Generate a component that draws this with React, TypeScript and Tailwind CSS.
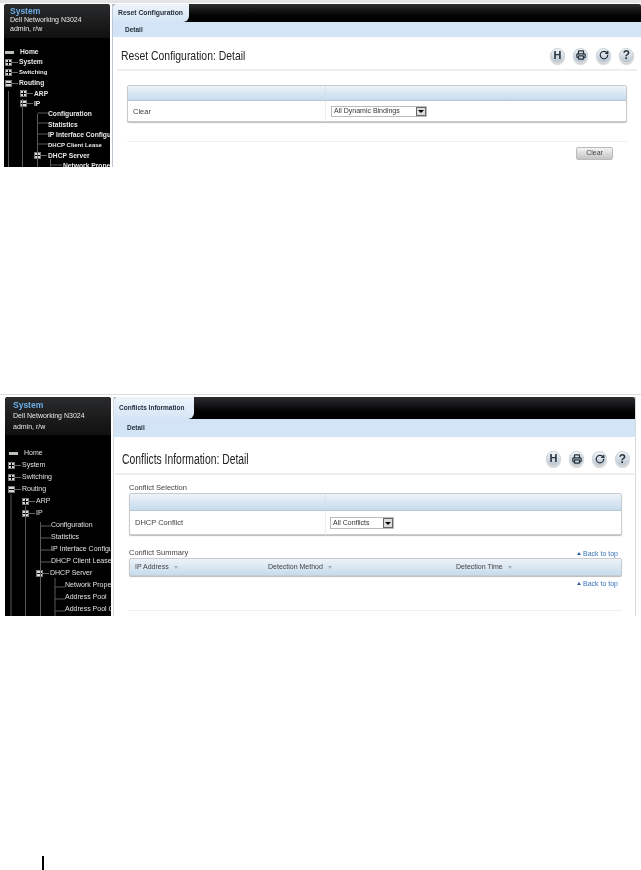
import { Printer, RotateCw } from "lucide-react"
import type { ReactNode } from "react"

const Expander = ({ open, className }: { open?: boolean; className: string }) => (
    <span className={`flex items-center justify-center bg-[#d8d8d8] border border-[#777] text-black font-bold shrink-0 ${className}`}>
        <span className="relative block w-[5px] h-[1px] bg-black">
            {!open && <span className="absolute left-[2px] top-[-2px] w-[1px] h-[5px] bg-black" />}
        </span>
    </span>
)

const ToolIcons = ({ className }: { className: string }) => {
    const circle = "w-[15px] h-[15px] rounded-full bg-gradient-to-b from-[#f4f6f8] to-[#b9c6d2] border border-[#c4ced6] flex items-center justify-center text-[#26323c] font-bold shadow-[0_2px_1px_#d5d5d5]"
    return (
        <div className={`flex ${className}`}>
            <span className={`${circle} text-[11px]`}>H</span>
            <span className={circle}><Printer size={10} strokeWidth={3} /></span>
            <span className={circle}><RotateCw size={10} strokeWidth={3} /></span>
            <span className={`${circle} text-[12px]`}>?</span>
        </div>
    )
}

const TitleBar = ({ tab, className, tabClass, subClass }: { tab: string; className: string; tabClass: string; subClass: string }) => (
    <div className={className}>
        <div className="flex bg-gradient-to-b from-[#2e2f31] to-[#000] rounded-t-[2px]">
            <div className={`bg-gradient-to-b from-[#eef4fb] to-[#d5e5f6] rounded-tl-[3px] rounded-br-[6px] text-[#1f2a36] font-bold flex items-center ${tabClass}`}>
                {tab}
            </div>
        </div>
        <div className={`bg-[#d3e4f6] text-[#1f2a36] font-bold flex items-center ${subClass}`}>Detail</div>
    </div>
)

const Tree = ({ rows, rowClass, className }: { rows: { label: string; pad: string; icon?: "open" | "closed" | "home"; small?: boolean }[]; rowClass: string; className: string }) => (
    <div className={className}>
        {rows.map(r => (
            <div key={r.label} className={`flex items-center whitespace-nowrap ${rowClass} ${r.pad}`}>
                {r.icon === "home" && <span className="w-[9px] h-[3px] bg-[#b8c0b8] mr-[6px] shrink-0" />}
                {(r.icon === "open" || r.icon === "closed") && (
                    <>
                        <Expander open={r.icon === "open"} className="w-[7px] h-[7px]" />
                        <span className="w-[6px] h-[1px] bg-[#666] mr-[1px] shrink-0" />
                    </>
                )}
                <span className={r.small ? "text-[6px]" : ""}>{r.label}</span>
            </div>
        ))}
    </div>
)

const SideHead = ({ className, lineClass }: { className: string; lineClass: string }) => (
    <div className={`bg-gradient-to-b from-[#2b2c2e] to-[#101010] text-[#e8e8e8] ${className}`}>
        <div className="text-[#6bade6] font-bold text-[8.500px] leading-[9px]">System</div>
        <div className={`text-[7px] ${lineClass}`}>Dell Networking N3024</div>
        <div className={`text-[7px] ${lineClass}`}>admin, r/w</div>
    </div>
)

const TreeLines = ({ children }: { children: ReactNode }) => (
    <svg className="absolute inset-0 w-full h-full pointer-events-none" fill="none" stroke="#5a5a5a" strokeWidth="1">
        {children}
    </svg>
)

const selectBox = "flex items-center justify-between border border-[#bbb] bg-white text-[7px] text-[#333]"
const arrowBtn = (
    <span className="w-[10px] h-full bg-[#dcdcdc] border border-[#666] flex items-center justify-center">
        <span className="w-0 h-0 border-x-[3px] border-x-transparent border-t-[3px] border-t-black" />
    </span>
)
const tableHead = "bg-gradient-to-b from-[#eef3f8] to-[#c6dbed] border-b border-[#b4c7d6]"
const tableBox = "border border-[#c9cccf] rounded-[2px] shadow-[0_1px_1px_#bbb] bg-white"

const BackToTop = ({ className }: { className: string }) => (
    <div className={`flex justify-end items-center text-[7px] leading-[9px] text-[#3a73b8] ${className}`}>
        <span className="w-0 h-0 border-x-[2px] border-x-transparent border-b-[3px] border-b-[#2f5f9a] mr-[2px]" />
        Back to top
    </div>
)

const SortHead = ({ label, className }: { label: string; className: string }) => (
    <div className={`flex items-center ${className}`}>
        {label}
        <span className="ml-[5px] w-0 h-0 border-x-[2px] border-x-transparent border-t-[3px] border-t-[#9db3c6]" />
    </div>
)

const resetRows = [
    { label: "Home", pad: "pl-[1px]", icon: "home" as const },
    { label: "System", pad: "pl-[1px]", icon: "closed" as const },
    { label: "Switching", pad: "pl-[1px]", icon: "closed" as const, small: true },
    { label: "Routing", pad: "pl-[1px]", icon: "open" as const },
    { label: "ARP", pad: "pl-[16px]", icon: "closed" as const },
    { label: "IP", pad: "pl-[16px]", icon: "open" as const },
    { label: "Configuration", pad: "pl-[44px]" },
    { label: "Statistics", pad: "pl-[44px]" },
    { label: "IP Interface Configu", pad: "pl-[44px]" },
    { label: "DHCP Client Lease", pad: "pl-[44px]", small: true },
    { label: "DHCP Server", pad: "pl-[30px]", icon: "open" as const },
    { label: "Network Prope", pad: "pl-[59px]" },
]

const conflictRows = [
    { label: "Home", pad: "pl-[4px]", icon: "home" as const },
    { label: "System", pad: "pl-[3px]", icon: "closed" as const },
    { label: "Switching", pad: "pl-[3px]", icon: "closed" as const },
    { label: "Routing", pad: "pl-[3px]", icon: "open" as const },
    { label: "ARP", pad: "pl-[17px]", icon: "closed" as const },
    { label: "IP", pad: "pl-[17px]", icon: "open" as const },
    { label: "Configuration", pad: "pl-[46px]" },
    { label: "Statistics", pad: "pl-[46px]" },
    { label: "IP Interface Configu", pad: "pl-[46px]" },
    { label: "DHCP Client Lease", pad: "pl-[46px]" },
    { label: "DHCP Server", pad: "pl-[31px]", icon: "open" as const },
    { label: "Network Prope", pad: "pl-[60px]" },
    { label: "Address Pool", pad: "pl-[60px]" },
    { label: "Address Pool C", pad: "pl-[60px]" },
]

export default function App() {
    return (
        <div className="relative w-[641px] h-[870px] bg-white overflow-hidden font-['Liberation_Sans',Arial,sans-serif] text-[#333]">
            {/* first screenshot */}
            <div className="h-[167px] border-t-[3px] border-[#e4e4e4] pt-[1px] pl-[4px] flex gap-[2px] overflow-hidden blur-[0.3px]">
                <div className="relative w-[106px] h-[163px] bg-black rounded-t-[3px] overflow-hidden shrink-0">
                    <SideHead className="h-[34px] pl-[6px] pt-[3px]" lineClass="leading-[8.500px]" />
                    <Tree rows={resetRows} rowClass="h-[10.35px] text-[6.700px] font-bold text-[#e8e8e8]" className="pt-[9px]" />
                    <TreeLines>
                        <path d="M4.500 87V163M18.500 95V163M33.500 110V163M33.500 109H44M33.500 119H44M33.500 130H44M33.500 140H44M46.500 155V163M46.500 161H58" />
                    </TreeLines>
                </div>
                <div className="flex-1 min-w-0 border-l border-[#bfc8d0]">
                    <TitleBar
                        tab="Reset Configuration"
                        className="w-full"
                        tabClass="w-[76px] h-[18px] pl-[5px] text-[6.800px]"
                        subClass="h-[15px] pl-[12px] text-[6.500px]"
                    />
                    <div className="flex items-center justify-between h-[34px] mx-[4px] pl-[4px] pr-[3px] border-b-2 border-[#eeeeee]">
                        <h1 className="text-[13px] text-[#222] pt-[5px] scale-x-[0.8] origin-left whitespace-nowrap">Reset Configuration: Detail</h1>
                        <ToolIcons className="gap-[8px] pt-[4px]" />
                    </div>
                    <div className={`${tableBox} ml-[14px] mr-[14px] mt-[14px] h-[37px]`}>
                        <div className={`${tableHead} h-[15px] flex`}>
                            <span className="w-[198px] border-r border-[#d5e1ec]" />
                        </div>
                        <div className="flex items-center h-[21px] text-[7.500px] text-[#444]">
                            <span className="w-[198px] pl-[5px] h-full flex items-center border-r border-[#eeeeee]">Clear</span>
                            <div className={`${selectBox} ml-[5px] w-[96px] h-[11px] pl-[2px]`}>
                                All Dynamic Bindings
                                {arrowBtn}
                            </div>
                        </div>
                    </div>
                    <div className="ml-[14px] mr-[14px] mt-[19px] border-t border-[#eeeeee] flex justify-end pt-[5px] pr-[14px]">
                        <button className="w-[37px] h-[13px] rounded-[2px] bg-gradient-to-b from-[#f4f4f4] to-[#c4c4c4] border border-[#bbb] text-[7px] text-[#444]">Clear</button>
                    </div>
                </div>
            </div>

            {/* second screenshot */}
            <div className="mt-[227px] h-[222px] border-t border-[#dcdcdc] pt-[2px] pl-[5px] pr-[5px] flex gap-[2px] overflow-hidden blur-[0.4px]">
                <div className="relative w-[106px] h-[220px] bg-black rounded-t-[3px] overflow-hidden shrink-0">
                    <SideHead className="h-[38px] pl-[8px] pt-[4px]" lineClass="leading-[11px]" />
                    <Tree rows={conflictRows} rowClass="h-[12px] text-[7px] text-[#e0e0e0]" className="pt-[12px]" />
                    <TreeLines>
                        <path d="M6 97V220M20.500 109V220M35.500 125V220M35.500 129H46M35.500 141H46M35.500 153H46M35.500 165H46M50 181V220M50 190H60M50 202H60M50 214H60" />
                    </TreeLines>
                </div>
                <div className="flex-1 min-w-0 border-x border-[#d3dbe2]">
                    <TitleBar
                        tab="Conflicts Information"
                        className="w-full"
                        tabClass="w-[80px] h-[22px] pl-[5px] text-[6.500px]"
                        subClass="h-[18px] pl-[13px] text-[6.500px]"
                    />
                    <div className="flex items-center justify-between h-[38px] mx-[1px] pl-[7px] pr-[4px] border-b-2 border-[#eeeeee]">
                        <h1 className="text-[14px] text-[#222] pt-[9px] scale-x-[0.74] origin-left whitespace-nowrap">Conflicts Information: Detail</h1>
                        <ToolIcons className="gap-[8px] pt-[7px]" />
                    </div>
                    <div className="ml-[15px] mr-[13px] mt-[8px]">
                        <div className="text-[7.500px] leading-[9px] text-[#444]">Conflict Selection</div>
                        <div className={`${tableBox} mt-[1px] h-[42px]`}>
                            <div className={`${tableHead} h-[17px] flex`}>
                                <span className="w-[196px] border-r border-[#d5e1ec]" />
                            </div>
                            <div className="flex items-center h-[24px] text-[7.500px] text-[#444]">
                                <span className="w-[196px] pl-[5px] h-full flex items-center border-r border-[#eeeeee]">DHCP Conflict</span>
                                <div className={`${selectBox} ml-[4px] w-[64px] h-[12px] pl-[2px]`}>
                                    All Conflicts
                                    {arrowBtn}
                                </div>
                            </div>
                        </div>
                        <div className="flex justify-between mt-[13px] h-[10px]">
                            <span className="text-[7.500px] leading-[9px] text-[#444]">Conflict Summary</span>
                            <BackToTop className="pr-[4px]" />
                        </div>
                        <div className={`${tableBox} h-[18px] ${tableHead} flex items-center text-[7px] text-[#444]`}>
                            <SortHead label="IP Address" className="w-[138px] pl-[5px]" />
                            <SortHead label="Detection Method" className="w-[188px]" />
                            <SortHead label="Detection Time" className="" />
                        </div>
                        <BackToTop className="pr-[4px] mt-[3px]" />
                        <div className="mt-[22px] border-t border-[#eeeeee]" />
                    </div>
                </div>
            </div>

            {/* page margin bar */}
            <div className="absolute left-[42px] top-[856px] w-[2px] h-[14px] bg-black" />
        </div>
    )
}
